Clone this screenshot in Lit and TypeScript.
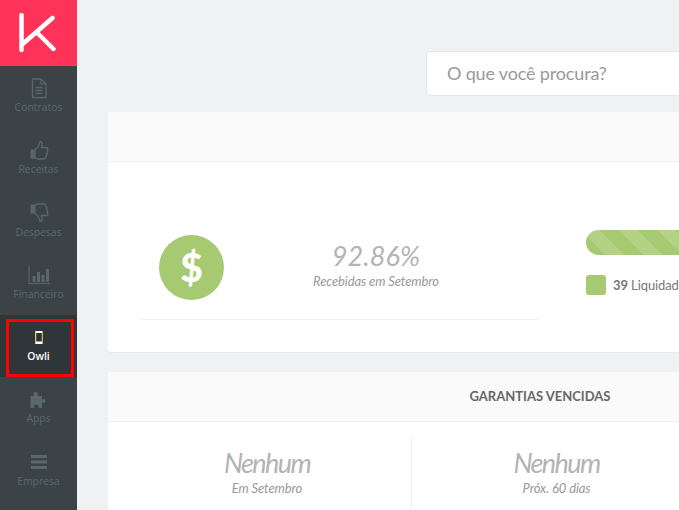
import { LitElement, html, css, svg } from 'lit';
import { customElement } from 'lit/decorators.js';

const icons: Record<string, unknown> = {
  doc: svg`<path d="M4.500 2h8.500l5 5v13.500H4.500z" fill="none" stroke="currentColor" stroke-width="1.300" stroke-linejoin="round"/><path d="M13 2v5h5" fill="none" stroke="currentColor" stroke-width="1.100"/><path d="M7.500 10.500h7M7.500 13.500h7M7.500 16.500h7" stroke="currentColor" stroke-width="1.400"/>`,
  up: svg`<path d="M2.500 10.500h4v9h-4z" fill="currentColor"/><path d="M7 10.500c2.500-1.500 4.500-4 5-8 2.200-.5 2.800 2.500 1.300 6h5c2 0 2 2.500.7 3 1 1 .8 2.700-.5 3.200.8 1.200.3 2.500-.8 3 .3 1.500-.6 2.300-2 2.300h-5c-1.500 0-2.500-.8-3.700-.8z" fill="none" stroke="currentColor" stroke-width="1.300" stroke-linejoin="round"/>`,
  down: svg`<path d="M2.500 2.500h4v9h-4z" fill="currentColor"/><path d="M7 11.500c2.500 1.500 4.500 4 5 8 2.200.5 2.800-2.500 1.300-6h5c2 0 2-2.500.7-3 1-1 .8-2.700-.5-3.200.8-1.200.3-2.500-.8-3 .3-1.500-.6-2.300-2-2.300h-5c-1.500 0-2.500.8-3.700.8z" fill="none" stroke="currentColor" stroke-width="1.300" stroke-linejoin="round"/>`,
  chart: svg`<path d="M1 1.500v18h21" fill="none" stroke="currentColor" stroke-width="1.100"/><path d="M4.500 12h3v6h-3zM9 8h3v10H9zM13.500 11h3v7h-3zM18 5h3v13h-3z" fill="currentColor"/>`,
  phone: svg`<rect x="7" y="5" width="8" height="13" rx="1" fill="#fff"/><rect x="8.200" y="7" width="5.600" height="8.500" fill="#2b3437"/><rect x="7" y="5" width="1" height="13" fill="#f0c36a"/><rect x="14" y="5" width="1" height="13" fill="#e8a04a"/>`,
  puzzle: svg`<path d="M2.500 8h4c-.7-.8-1-1.400-1-2 0-1.200 1-2 2.200-2s2.300.8 2.300 2c0 .6-.3 1.200-1 2h5v4c.8-.7 1.300-.9 1.900-.9 1 0 1.800.8 1.800 1.800s-.8 1.800-1.800 1.800c-.6 0-1.100-.2-1.900-.9V20h-3.700c.3-.8.400-1.200.4-1.600 0-1.200-1-2-2.300-2s-2.300.8-2.300 2c0 .4.100.8.400 1.600H2.500z" fill="currentColor"/>`,
  menu: svg`<path d="M3 4h16v3H3zM3 9.500h16v3H3zM3 15h16v3H3z" fill="currentColor"/>`,
};

const nav = [
  { icon: 'doc', label: 'Contratos' },
  { icon: 'up', label: 'Receitas' },
  { icon: 'down', label: 'Despesas' },
  { icon: 'chart', label: 'Financeiro' },
  { icon: 'phone', label: 'Owli', active: true },
  { icon: 'puzzle', label: 'Apps' },
  { icon: 'menu', label: 'Empresa' },
];

@customElement('app-root')
export class AppRoot extends LitElement {
  static styles = css`
    :host {
      display: flex;
      width: 679px;
      height: 510px;
      overflow: hidden;
      background: #f0f1f3;
      font-family: Lato, sans-serif;
    }
    .side {
      flex: 0 0 77px;
      background: #3b4346;
      color: #5a686e;
    }
    .logo {
      height: 66px;
      background: #ff3359;
      display: flex;
      align-items: center;
      justify-content: center;
    }
    .item {
      position: relative;
      height: 62.3px;
      display: flex;
      flex-direction: column;
      align-items: center;
      padding-top: 11px;
      box-sizing: border-box;
      font: 10.4px 'Open Sans', 'Noto Sans', sans-serif;
    }
    .item svg {
      width: 22px;
      height: 22px;
      margin-bottom: 1px;
    }
    .item span {
      line-height: 14px;
    }
    .item.active {
      background: #2f3639;
      color: #fff;
      font-weight: 600;
    }
    .item.active::after {
      content: '';
      position: absolute;
      left: 6px;
      top: 4px;
      width: 68px;
      height: 58px;
      box-sizing: border-box;
      border: 3px solid #f00;
    }
    .main {
      flex: 0 0 auto;
      width: 602px;
      padding: 51px 0 0 31px;
      box-sizing: border-box;
    }
    .search {
      margin-left: 318px;
      width: 400px;
      height: 45px;
      box-sizing: border-box;
      background: #fff;
      border: 1px solid #e4e5e7;
      border-radius: 4px;
      padding-left: 20px;
      font-size: 18px;
      letter-spacing: -0.16px;
      line-height: 43px;
      color: #999;
    }
    .card {
      width: 864px;
      background: #fff;
      border-radius: 3px;
      box-shadow: 0 1px 1px #e6e7e9;
    }
    .card.first {
      margin-top: 16px;
    }
    .card.second {
      margin-top: 20px;
    }
    .head {
      height: 49px;
      background: #fafafa;
      border-bottom: 1px solid #f0f1f3;
      text-align: center;
      font-size: 13px;
      font-weight: 700;
      line-height: 48px;
      color: #666;
    }
    .stats {
      height: 190px;
      display: flex;
      padding: 0 29px;
    }
    .stat {
      flex: 0 0 405px;
      height: 158px;
      box-sizing: border-box;
      border-bottom: 1px solid #f0f1f3;
      border-radius: 6px;
      display: flex;
      align-items: center;
      padding: 73px 0 19px 22px;
    }
    .coin {
      flex: 0 0 65px;
      height: 65px;
      border-radius: 50%;
      background: #a6ca72;
      color: #fff;
      text-align: center;
      font-size: 39px;
      font-weight: 900;
      line-height: 65px;
    }
    .figure {
      flex: 1;
      text-align: center;
      padding-right: 14px;
      margin-top: -7px;
    }
    .big {
      font-size: 27px;
      font-style: italic;
      font-weight: 400;
      color: #b3b3b3;
      line-height: 33px;
    }
    .big.pct {
      letter-spacing: 0.1px;
    }
    .big.word {
      letter-spacing: -1.6px;
    }
    .small {
      font-size: 13px;
      font-style: italic;
      letter-spacing: -0.1px;
      color: #999;
      line-height: 18px;
    }
    .progress {
      margin-left: 44px;
      padding-top: 68px;
      width: 400px;
    }
    .bar {
      height: 25px;
      border-radius: 13px;
      background: repeating-linear-gradient(45deg, #a6ca72 0 14px, #b4d286 14px 27px);
    }
    .legend {
      display: flex;
      align-items: center;
      gap: 7px;
      margin-top: 20px;
      font-size: 13px;
      letter-spacing: -0.1px;
      color: #777;
    }
    .legend b {
      font-weight: 700;
    }
    .swatch {
      width: 20px;
      height: 20px;
      border-radius: 3px;
      background: #a6ca72;
    }
    .cols {
      display: grid;
      grid-template-columns: 288px 290px 1fr;
      padding: 15px 0 0 15px;
      height: 90px;
      box-sizing: border-box;
    }
    .col {
      height: 72px;
      padding-top: 9px;
      box-sizing: border-box;
      text-align: center;
    }
    .col + .col {
      border-left: 1px solid #eeeff1;
    }
  `;

  render() {
    return html`
      <aside class="side">
        <div class="logo">
          <svg width="40" height="40" viewBox="0 0 40 40">
            <path d="M2.500 2v35M33.500 5L2.500 32M17.500 19l17 17" fill="none" stroke="#fff" stroke-width="4.500" stroke-linecap="round"/>
          </svg>
        </div>
        ${nav.map(
          (n) => html`
            <div class="item ${n.active ? 'active' : ''}">
              <svg viewBox="0 0 22 22">${icons[n.icon]}</svg>
              <span>${n.label}</span>
            </div>
          `
        )}
      </aside>
      <main class="main">
        <div class="search">O que você procura?</div>
        <section class="card first">
          <div class="head"></div>
          <div class="stats">
            <div class="stat">
              <div class="coin">$</div>
              <div class="figure">
                <div class="big pct">92.86%</div>
                <div class="small">Recebidas em Setembro</div>
              </div>
            </div>
            <div class="progress">
              <div class="bar"></div>
              <div class="legend"><span class="swatch"></span><span><b>39</b> Liquidadas</span></div>
            </div>
          </div>
        </section>
        <section class="card second">
          <div class="head">GARANTIAS VENCIDAS</div>
          <div class="cols">
            <div class="col"><div class="big word">Nenhum</div><div class="small">Em Setembro</div></div>
            <div class="col"><div class="big word">Nenhum</div><div class="small">Próx. 60 dias</div></div>
          </div>
        </section>
      </main>
    `;
  }
}
